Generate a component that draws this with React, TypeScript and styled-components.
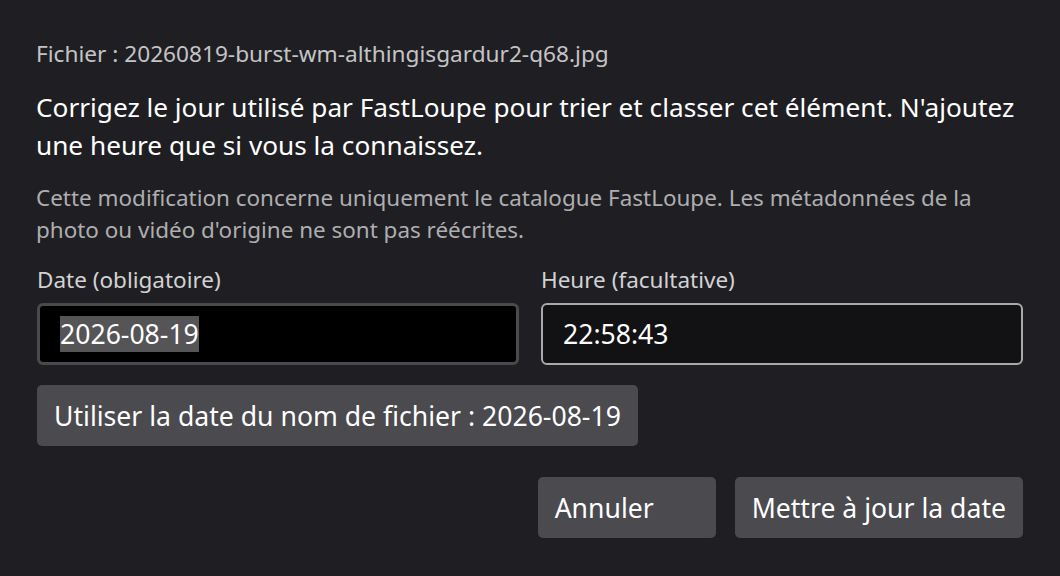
import React from "react";
import styled, { createGlobalStyle } from "styled-components";

const Global = createGlobalStyle`
  html, body { margin: 0; padding: 0; background: #1f1f23; }
  body { font-family: "Noto Sans", "Open Sans", sans-serif; color: #fff; }
  * { box-sizing: border-box; }
  input::selection { background: #555456; color: #fff; }
`;

const Dialog = styled.div`
  width: 1060px;
  height: 576px;
  padding: 38px 37px 38px 36px;
  background: #1f1f23;
  display: flex;
  flex-direction: column;
`;

const FileLine = styled.div`
  font-size: 22.65px;
  line-height: 32px;
  color: #c4c4c6;
`;

const Lead = styled.p`
  margin: 18px 0 0;
  font-size: 26.2px;
  line-height: 38px;
  color: #ffffff;
`;

const Note = styled.p`
  margin: 18px 0 0;
  font-size: 22.45px;
  line-height: 32px;
  color: #aeaeb0;
`;

const Fields = styled.div`
  margin-top: 18px;
  display: grid;
  grid-template-columns: 1fr 1fr;
  column-gap: 22px;
  padding-left: 1px;
`;

const Field = styled.label`
  display: flex;
  flex-direction: column;
  gap: 7px;
`;

const Label = styled.span`
  font-size: 22.5px;
  line-height: 32px;
  color: #d2d2d4;
`;

const Input = styled.input<{ $focused?: boolean }>`
  height: 62px;
  width: 100%;
  padding: 0 20px;
  font-family: inherit;
  font-size: 26.6px;
  color: #fff;
  border-radius: 6px;
  outline: none;
  background: ${(p) => (p.$focused ? "#000000" : "#121214")};
  border: ${(p) => (p.$focused ? "3px solid #4a4a4c" : "2px solid #a9a9ab")};
`;

const Button = styled.button<{ $minWidth?: number }>`
  height: 61px;
  padding: 0 17px;
  border: none;
  border-radius: 5px;
  background: #4a4a4f;
  color: #fff;
  font-family: inherit;
  font-size: 26.6px;
  text-align: left;
  white-space: nowrap;
  min-width: ${(p) => (p.$minWidth ? `${p.$minWidth}px` : "0")};
  cursor: pointer;
`;

const FillRow = styled.div`
  margin-top: 20px;
  padding-left: 1px;
  display: flex;
`;

const Footer = styled.div`
  margin-top: 31px;
  display: flex;
  justify-content: flex-end;
  gap: 19px;
`;

export default function App() {
  const dateRef = React.useRef<HTMLInputElement>(null);
  React.useEffect(() => {
    const el = dateRef.current;
    if (el) {
      el.focus();
      el.select();
    }
  }, []);
  return (
    <>
      <Global />
      <Dialog>
        <FileLine>Fichier : 20260819-burst-wm-althingisgardur2-q68.jpg</FileLine>
        <Lead>
          Corrigez le jour utilisé par FastLoupe pour trier et classer cet élément. N'ajoutez une heure que si vous la connaissez.
        </Lead>
        <Note>
          Cette modification concerne uniquement le catalogue FastLoupe. Les métadonnées de la photo ou vidéo d'origine ne sont pas réécrites.
        </Note>
        <Fields>
          <Field>
            <Label>Date (obligatoire)</Label>
            <Input ref={dateRef} $focused defaultValue="2026-08-19" />
          </Field>
          <Field>
            <Label>Heure (facultative)</Label>
            <Input defaultValue="22:58:43" />
          </Field>
        </Fields>
        <FillRow>
          <Button>Utiliser la date du nom de fichier : 2026-08-19</Button>
        </FillRow>
        <Footer>
          <Button $minWidth={178}>Annuler</Button>
          <Button>Mettre à jour la date</Button>
        </Footer>
      </Dialog>
    </>
  );
}
